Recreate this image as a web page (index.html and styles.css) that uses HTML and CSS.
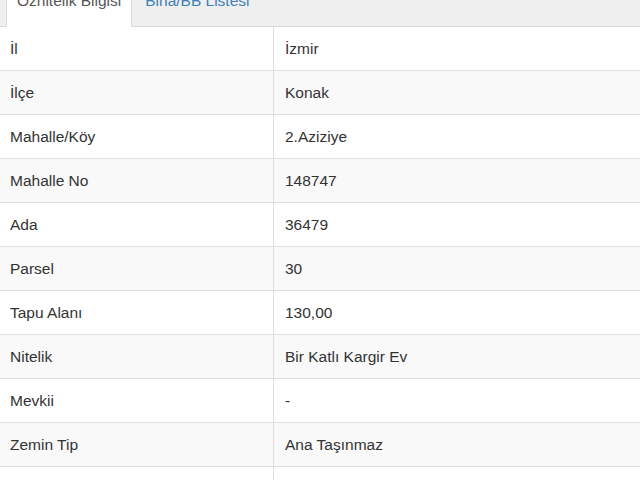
FILE: index.html
```html
<!DOCTYPE html>
<html>
<head>
    <meta charset="utf-8">
    <link rel="stylesheet" href="styles.css">
</head>
<body>
    <div class="panel">
        <ul class="tabs">
            <li class="tab active">Öznitelik Bilgisi</li>
            <li class="tab">Bina/BB Listesi</li>
        </ul>

        <table class="info">
            <colgroup>
                <col class="col-label">
                <col>
            </colgroup>
            <tbody>
                <tr><td class="label">İl</td><td>İzmir</td></tr>
                <tr><td class="label">İlçe</td><td>Konak</td></tr>
                <tr><td class="label">Mahalle/Köy</td><td>2.Aziziye</td></tr>
                <tr><td class="label">Mahalle No</td><td>148747</td></tr>
                <tr><td class="label">Ada</td><td>36479</td></tr>
                <tr><td class="label">Parsel</td><td>30</td></tr>
                <tr><td class="label">Tapu Alanı</td><td>130,00</td></tr>
                <tr><td class="label">Nitelik</td><td>Bir Katlı Kargir Ev</td></tr>
                <tr><td class="label">Mevkii</td><td>-</td></tr>
                <tr><td class="label">Zemin Tip</td><td>Ana Taşınmaz</td></tr>
                <tr><td class="label">Pafta</td><td>K18C12B</td></tr>
            </tbody>
        </table>
    </div>
</body>
</html>
```

FILE: styles.css
```css
html, body {
    margin: 0;
    height: 480px;
    overflow: hidden;
}
body {
    background: #fff;
    color: #333;
    font-family: "Liberation Sans", Arial, sans-serif;
    font-size: 15.5px;
}
.tabs {
    display: flex;
    margin: -10px 0 0;
    padding: 0 0 0 6px;
    list-style: none;
    background: #efefef;
    border-bottom: 1px solid #d9d9d9;
}
.tab {
    padding: 0 10px 15px;
    line-height: 20px;
    margin-right: 2px;
    margin-bottom: -1px;
    border: 1px solid transparent;
    color: #3f80b8;
}
.tab.active {
    background: #fff;
    color: #555;
    border-color: #d9d9d9;
    border-bottom-color: transparent;
}
.info {
    width: 100%;
    table-layout: fixed;
    border-collapse: separate;
    border-spacing: 0;
}
.col-label {
    width: 274px;
}
.info td {
    padding: 11px 11px;
    line-height: 21px;
    border-top: 1px solid #dedede;
    white-space: nowrap;
}
.info tr:first-child td {
    border-top: none;
}
.info td.label {
    padding-left: 10px;
    border-right: 1px solid #dedede;
}
.info tr:nth-child(even) td {
    background: #f9f9f9;
}
```
